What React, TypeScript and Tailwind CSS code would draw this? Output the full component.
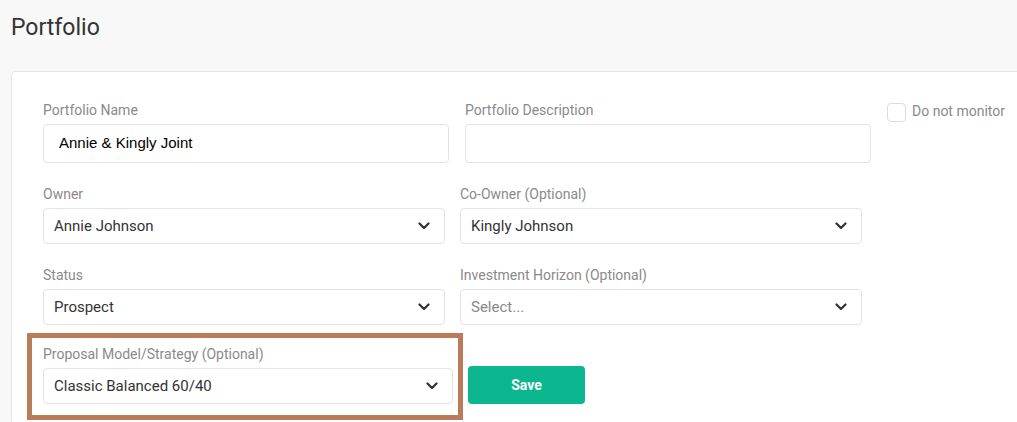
import React from 'react';

const roboto = { fontFamily: 'Roboto, "Liberation Sans", sans-serif' };

function Chevron() {
  return (
    <svg width="12" height="8" viewBox="0 0 12 8" className="shrink-0">
      <path d="M1.5 1.5 L6 6 L10.5 1.5" fill="none" stroke="#333" strokeWidth="2.2" strokeLinecap="round" strokeLinejoin="round" />
    </svg>
  );
}

function Label({ children }: { children: React.ReactNode }) {
  return <div className="text-[14px] leading-[18px] text-[#8a8a8a] mb-[5px]">{children}</div>;
}

function Select({ value, placeholder, width }: { value: string; placeholder?: boolean; width: string }) {
  return (
    <div className={`${width} h-[36px] flex items-center justify-between bg-white border border-[#e3e3e3] rounded-[4px] pl-[10px] pr-[14px]`}>
      <span className={`text-[15px] ${placeholder ? 'text-[#888]' : 'text-[#333]'}`}>{value}</span>
      <Chevron />
    </div>
  );
}

export default function App() {
  return (
    <div className="min-h-screen bg-[#f8f8f8] pl-[11px] pt-[14px] overflow-hidden" style={roboto}>
      <h1 className="text-[23px] leading-[27px] text-[#333] font-normal">Portfolio</h1>
      <div className="mt-[30px] w-[1030px] bg-white border border-[#e6e6e6] rounded-[4px] pl-[31px] pt-[29px] pb-[10px]">
        {/* row 1 */}
        <div className="flex items-start">
          <div className="w-[406px]">
            <Label>Portfolio Name</Label>
            <div className="h-[39px] flex items-center border border-[#e3e3e3] rounded-[4px] pl-[15px] text-[15px] text-black" style={{ fontFamily: '"Liberation Sans", Arial, sans-serif' }}>
              Annie &amp; Kingly Joint
            </div>
          </div>
          <div className="w-[406px] ml-[16px]">
            <Label>Portfolio Description</Label>
            <div className="h-[39px] border border-[#e3e3e3] rounded-[4px]" />
          </div>
          <div className="ml-[16px] mt-[2px] flex items-start gap-[6px]">
            <div className="w-[19px] h-[19px] border border-[#dcdcdc] rounded-[4px] bg-white" />
            <span className="text-[14px] leading-[16px] text-[#8a8a8a]">Do not monitor</span>
          </div>
        </div>

        {/* row 2 */}
        <div className="flex items-start gap-[15px] mt-[22px]">
          <div>
            <Label>Owner</Label>
            <Select value="Annie Johnson" width="w-[402px]" />
          </div>
          <div>
            <Label>Co-Owner (Optional)</Label>
            <Select value="Kingly Johnson" width="w-[402px]" />
          </div>
        </div>

        {/* row 3 */}
        <div className="flex items-start gap-[15px] mt-[22px]">
          <div>
            <Label>Status</Label>
            <Select value="Prospect" width="w-[402px]" />
          </div>
          <div>
            <Label>Investment Horizon (Optional)</Label>
            <Select value="Select..." placeholder width="w-[402px]" />
          </div>
        </div>

        {/* row 4 */}
        <div className="flex items-start mt-[8px] ml-[-16px]">
          <div className="border-[5px] border-[#b97b5a] pl-[11px] pr-[5px] pt-[7px] pb-[11px]">
            <Label>Proposal Model/Strategy (Optional)</Label>
            <Select value="Classic Balanced 60/40" width="w-[410px]" />
          </div>
          <button className="ml-[5px] mt-[33px] w-[117px] h-[38px] rounded-[4px] bg-[#0ab78f] text-white text-[14px] font-bold">
            Save
          </button>
        </div>
      </div>
    </div>
  );
}
